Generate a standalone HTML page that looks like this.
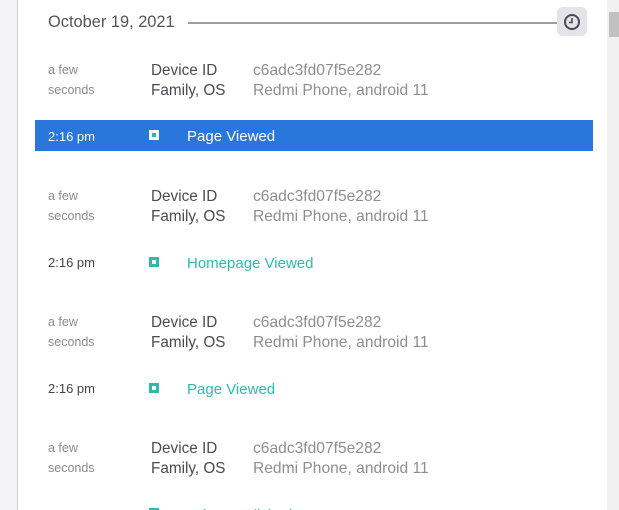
<!DOCTYPE html>
<html><head><style>
html,body{margin:0;width:619px;height:510px;overflow:hidden}
body{background:#f4f4f6;font-family:"Liberation Sans",sans-serif;position:relative}
.panel{position:absolute;left:17px;top:0;width:590px;height:510px;background:#fff;border-left:1px solid #c9c9d2}
.abs{position:absolute;white-space:nowrap}
.sb{position:absolute;left:607px;top:0;width:12px;height:510px;background:#f1f1f1}
.thumb{position:absolute;left:609px;top:12px;width:10px;height:25px;background:#c1c1c1}
.small{font-size:12.5px;color:#8a8a93}
.lbl{font-size:15.3px;color:#4a4a55}
.val{font-size:15.6px;color:#8d8d96}
.time{font-size:13px;color:#444}
.ev{font-size:15px;color:#2bbbad}
.ic{position:absolute;width:10px;height:10px;background:#2bbbad}
.ic:after{content:"";position:absolute;left:3px;top:3px;width:4px;height:4px;background:#fff}
#w{position:absolute;left:0;top:2px;width:619px;height:510px}
</style></head><body>
<div class="panel"></div>
<div class="abs" style="left:48px;top:13px;font-size:16.4px;color:#555">October 19, 2021</div>
<div class="abs" style="left:188px;top:22px;width:370px;height:2px;background:#9d9da6"></div>
<div class="abs" style="left:557px;top:7px;width:30px;height:29px;border-radius:6px;background:#e3e3e8"></div>
<svg class="abs" style="left:562px;top:12px" width="20" height="20" viewBox="0 0 20 20"><circle cx="10" cy="10" r="7" fill="none" stroke="#4a4a55" stroke-width="2"/><path d="M10 6v4.5H7" fill="none" stroke="#4a4a55" stroke-width="1.6"/></svg>

<div class="abs" style="left:35px;top:120px;width:558px;height:31px;background:#2977dd"></div>

<div id="w">
<div class="abs small" style="left:48px;top:61px">a few</div>
<div class="abs small" style="left:48px;top:81px">seconds</div>
<div class="abs lbl" style="left:151px;top:60px">Device ID</div>
<div class="abs lbl" style="left:151px;top:80px">Family, OS</div>
<div class="abs val" style="left:253px;top:60px">c6adc3fd07f5e282</div>
<div class="abs val" style="left:253px;top:80px">Redmi Phone, android 11</div>
<div class="abs time" style="left:48px;top:127px;color:#fff">2:16 pm</div>
<div class="abs" style="left:149px;top:128px;width:10px;height:10px;background:#fff"><div style="position:absolute;left:3px;top:3px;width:4px;height:4px;background:#2bbbad"></div></div>
<div class="abs ev" style="left:187px;top:126px;color:#fff">Page Viewed</div>

<div class="abs small" style="left:48px;top:187px">a few</div>
<div class="abs small" style="left:48px;top:207px">seconds</div>
<div class="abs lbl" style="left:151px;top:186px">Device ID</div>
<div class="abs lbl" style="left:151px;top:206px">Family, OS</div>
<div class="abs val" style="left:253px;top:186px">c6adc3fd07f5e282</div>
<div class="abs val" style="left:253px;top:206px">Redmi Phone, android 11</div>
<div class="abs time" style="left:48px;top:253px">2:16 pm</div>
<div class="ic" style="left:149px;top:255px"></div>
<div class="abs ev" style="left:187px;top:253px">Homepage Viewed</div>

<div class="abs small" style="left:48px;top:313px">a few</div>
<div class="abs small" style="left:48px;top:333px">seconds</div>
<div class="abs lbl" style="left:151px;top:312px">Device ID</div>
<div class="abs lbl" style="left:151px;top:332px">Family, OS</div>
<div class="abs val" style="left:253px;top:312px">c6adc3fd07f5e282</div>
<div class="abs val" style="left:253px;top:332px">Redmi Phone, android 11</div>
<div class="abs time" style="left:48px;top:379px">2:16 pm</div>
<div class="ic" style="left:149px;top:381px"></div>
<div class="abs ev" style="left:187px;top:379px">Page Viewed</div>

<div class="abs small" style="left:48px;top:439px">a few</div>
<div class="abs small" style="left:48px;top:459px">seconds</div>
<div class="abs lbl" style="left:151px;top:438px">Device ID</div>
<div class="abs lbl" style="left:151px;top:458px">Family, OS</div>
<div class="abs val" style="left:253px;top:438px">c6adc3fd07f5e282</div>
<div class="abs val" style="left:253px;top:458px">Redmi Phone, android 11</div>
<div class="abs time" style="left:48px;top:505px">2:16 pm</div>
<div class="ic" style="left:149px;top:506px"></div>
<div class="abs ev" style="left:187px;top:505px">Tab Bar Clicked</div>
</div>
<div class="sb"></div><div class="thumb"></div>
</body></html>
